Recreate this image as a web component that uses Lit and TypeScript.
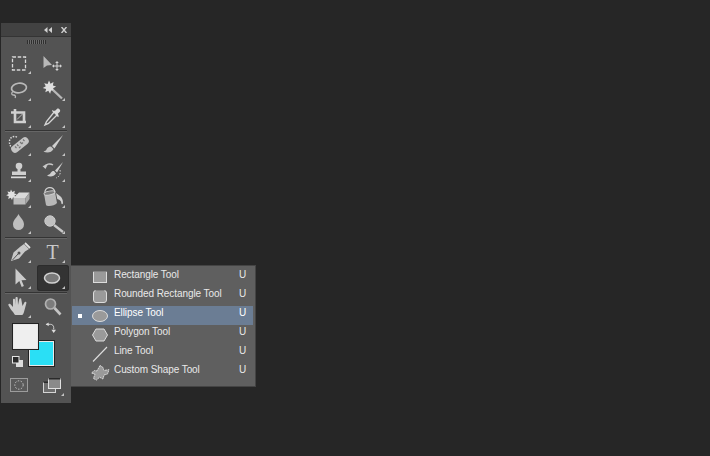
import { LitElement, html, css, svg } from "lit";
import { customElement } from "lit/decorators.js";

const icons: Record<string, any> = {
  marquee: svg`<rect x="10.500" y="7" width="13" height="13" fill="none" stroke="#d8d8d8" stroke-width="1.300" stroke-dasharray="3.500 1.700"/>`,
  move: svg`<path d="M7.500 6L16 15l-5 .5-3.500 2.500z" fill="#b8b8b8"/><path d="M21 12v8M17 16h8" stroke="#d4d4d4" stroke-width="1"/><path d="M21 11l-1.800 2h3.600zM21 21l-1.800-2h3.600zM16 16l2-1.800v3.600zM26 16l-2-1.800v3.600z" fill="#d4d4d4"/>`,
  lasso: svg`<ellipse cx="17" cy="11" rx="7.500" ry="4.800" fill="none" stroke="#b9b9b9" stroke-width="1.700" transform="rotate(-8 17 11)"/><path d="M11 14.500c-2 1.500-1.500 3.500.5 3.500s2.500 1.500 1.500 3" fill="none" stroke="#b9b9b9" stroke-width="1.300"/>`,
  wand: svg`<path transform="translate(-2 .5)" d="M15 3l1.500 3.200 3-1.700-.6 3.500 3.200 1-3 1.800 1.500 3-3.500-.8-1 3.200-1.800-3-3 1.600.8-3.400-3.300-1 3-1.700-1.600-3 3.400.8z" fill="#dedede"/><path d="M17 13l9 8.500" stroke="#b8b8b8" stroke-width="2.400"/>`,
  crop: svg`<path d="M9 8.500h13v10M13 5v13h11" fill="none" stroke="#d0d0d0" stroke-width="2.600"/><path d="M15 15.500l6-6" stroke="#bbb" stroke-width="1"/>`,
  dropper: svg`<g transform="translate(-2.500 -1.500)"><path d="M21 9l3 3-9 9-3.500 1.500L13 19z" fill="none" stroke="#d4d4d4" stroke-width="1.400"/><path d="M18.500 8.500l6 6 1-1-1.700-1.700 2.600-2.600c1.200-1.500-1.500-4-3-2.800l-2.600 2.600-1.600-1.600z" fill="#d8d8d8"/></g>`,
  heal: svg`<path d="M15 5c-4-1.500-7 .5-7.500 4s1.500 6 3 7.500" fill="none" stroke="#dcdcdc" stroke-width="1.400" stroke-dasharray="1.500 1.300"/><path d="M13 17L23 9" stroke="#c4c4c4" stroke-width="7.500" stroke-linecap="round"/><path d="M15 12.500l1.500 1.500M18 10l1.500 1.500M21 10.500l-1.500 1.500M17 16l1.500-1.500M21 7.500l1.500 1.500M13 14.500l1.500 1.500" stroke="#757575" stroke-width="1.100"/>`,
  brush: svg`<path d="M27 3L16 14l2.500 2.500z" fill="#cfcfcf"/><path d="M15 14.500c-3 0-4 2-4.500 3s-1.500 1.500-3 2c3 1.500 8 1.500 10-2.500z" fill="#c4c4c4"/>`,
  stamp: svg`<circle cx="17" cy="8" r="3.300" fill="#cfcfcf"/><path d="M15.500 10h3v3.500h5.500V17H10v-3.500h5.500z" fill="#cfcfcf"/><rect x="9" y="18.500" width="15" height="1.700" fill="#dadada"/>`,
  history: svg`<path d="M8 9c2-3 6-4 9-2" fill="none" stroke="#c8c8c8" stroke-width="1.400"/><path d="M6.500 8l5-1-2 4z" fill="#c8c8c8"/><path d="M27 4L19 12.500l2 2z" fill="#cfcfcf"/><path d="M18 13c-3 0-3 2-4 3l-3 1.500c2.500 1.500 7 1.500 9-2z" fill="#cfcfcf"/><path d="M24 12c1 4-1 7-4 8" fill="none" stroke="#cfcfcf" stroke-dasharray="1.500 1.500"/>`,
  eraser: svg`<path transform="translate(0 2)" d="M9 3.500l1.300 2.500 2.500-1.300-.5 2.800 2.700.8-2.500 1.300 1.200 2.500-2.800-.6-.9 2.600-1.300-2.400-2.500 1.200.6-2.700-2.600-.9 2.400-1.300-1.200-2.500 2.700.6z" fill="#e0e0e0"/><path d="M17 8.500h10.500l-4 5.500H11.500z" fill="#dadada"/><path d="M11.500 14h12v6.500h-12z" fill="#bcbcbc"/><path d="M23.500 14l4-5.500v6.500l-4 5.500z" fill="#a6a6a6"/>`,
  bucket: svg`<path d="M8 10L19 8l2 11c-2 3-10 4-11 2z" fill="#b8b8b8"/><ellipse cx="13.500" cy="9" rx="5.600" ry="1.900" fill="#7c7c7c" stroke="#cfcfcf" transform="rotate(-10 13.500 9)"/><path d="M9 9c-1-6 8-8 10-1" fill="none" stroke="#cfcfcf" stroke-width="1.300"/><path d="M20 9l4 3c2 1.500 3 4 3 7 0 1.500-1.700 1.500-1.700 0 0-2-1-3-4-4z" fill="#cfcfcf"/>`,
  blur: svg`<path d="M16.500 4c2 4 5.500 6 5.500 10.500a5.500 5.500 0 0 1-11 0C11 10 14.500 8 16.500 4z" fill="#bebebe"/>`,
  smudge: svg`<circle cx="14" cy="11" r="5.200" fill="#c0c0c0" stroke="#cdcdcd"/><path d="M18 15l9 7" stroke="#c8c8c8" stroke-width="2.400"/>`,
  pen: svg`<path d="M22 5l5 5-4 2.500-6 7-8 2.500 2.500-8.500 7-6z" fill="#c8c8c8"/><path d="M23 4l5 5" stroke="#dfdfdf" stroke-width="1.800"/><path d="M10.500 21l5.500-6" stroke="#555" stroke-width="1"/><circle cx="17" cy="14" r="1.500" fill="#555"/>`,
  arrow: svg`<path d="M13.500 3.500v16l3.800-3.400 2.400 6 2.200-1-2.400-5.800 5-.4z" fill="#cbcbcb"/>`,
  ellipse: svg`<ellipse cx="16" cy="13" rx="7.500" ry="5" fill="#7a7a7a" stroke="#d4d4d4" stroke-width="1.500"/>`,
  hand: svg`<path d="M11 19c-2-2-3-4-4.500-6.500-.8-1.300 1-2.300 2-1.200l2.500 2.700V6.800c0-1.300 2-1.300 2 0V12l.5-7c0-1.300 2.200-1.300 2.200 0l.3 7 1.300-6c.3-1.300 2.200-1 2 .4L20.500 13l2-3.800c.6-1.100 2.300-.4 1.900.9L22 19c-.5 1.500-1 3-2 3h-6.500c-1 0-1.500-2-2.500-3z" transform="translate(0 -1)" fill="#cccccc"/>`,
  zoom: svg`<circle cx="14.500" cy="10" r="5" fill="#7c7c7c" stroke="#b0b0b0" stroke-width="1.700"/><path d="M18.500 14l6 6.500" stroke="#c4c4c4" stroke-width="2.600"/>`,
};

const tools: string[][] = [
  ["marquee", "move"],
  ["lasso", "wand"],
  ["crop", "dropper"],
  ["heal", "brush"],
  ["stamp", "history"],
  ["eraser", "bucket"],
  ["blur", "smudge"],
  ["pen", "type"],
  ["arrow", "ellipse"],
  ["hand", "zoom"],
];

const menuIcons = [
  svg`<rect x="3.500" y="2.500" width="13" height="11" fill="#9a9a9a" stroke="#dcdcdc"/><path d="M3 2.500h14" stroke="#3c3c3c" stroke-width="1" opacity=".55"/>`,
  svg`<rect x="3.500" y="2.500" width="13" height="12" rx="2.500" fill="#9a9a9a" stroke="#dcdcdc"/><path d="M5.500 2.500h9" stroke="#3c3c3c" stroke-width="1" opacity=".55"/>`,
  svg`<ellipse cx="10" cy="9" rx="7.500" ry="5.500" fill="#9a9a9a" stroke="#dcdcdc"/>`,
  svg`<path d="M6 3h8l3.500 6L14 15H6L2.500 9z" fill="#9a9a9a" stroke="#dcdcdc"/>`,
  svg`<path d="M3 16.500L17 2" stroke="#dedede" stroke-width="1.100" fill="none"/>`,
  svg`<path d="M10 1.500l3 2c.8 1.500 0 2.500 1 3l5-.8-1.500 4.300-3.500 1-1 4-3.500-1.800-3 2.800-3-1.500 1.500-4.500L1.500 9 4.500 6.500l2.500.5z" fill="#9a9a9a" stroke="#d8d8d8" stroke-dasharray="2 .6"/>`,
];

const items = [
  "Rectangle Tool",
  "Rounded Rectangle Tool",
  "Ellipse Tool",
  "Polygon Tool",
  "Line Tool",
  "Custom Shape Tool",
];

@customElement("app-root")
export class AppRoot extends LitElement {
  static styles = css`
    :host {
      display: block;
      width: 710px;
      height: 456px;
      background: #262626;
      padding: 23px 0 0 1px;
      box-sizing: border-box;
      overflow: hidden;
      font-family: "Liberation Sans", Arial, sans-serif;
    }
    .panel {
      position: relative;
      width: 70px;
      height: 380px;
      background: #535353;
      box-sizing: border-box;
      border-radius: 2px 2px 0 0;
      display: flex;
      flex-direction: column;
      align-items: stretch;
    }
    .head {
      height: 14px;
      flex: none;
      background: #424242;
      border-bottom: 1px solid #343434;
      box-sizing: border-box;
      display: flex;
      justify-content: flex-end;
      align-items: center;
      gap: 9px;
      padding-right: 4px;
    }
    .head svg { display: block; }
    .grip {
      height: 13px;
      flex: none;
      display: flex;
      justify-content: center;
      padding-top: 3px;
      box-sizing: border-box;
    }
    .grip span {
      width: 19px;
      height: 4px;
      background: repeating-linear-gradient(90deg, #2f2f2f 0 1px, #6a6a6a 1px 2px);
    }
    .tools {
      display: flex;
      flex-direction: column;
      padding-left: 1px;
    }
    .row { display: flex; height: 26px; flex: none; }
    .tool {
      position: relative;
      width: 34px;
      height: 26px;
      box-sizing: border-box;
    }
    .tool svg { display: block; }
    .tool.on {
      background: #333333;
      border-radius: 3px;
      width: 32px;
      margin-left: 1px;
      box-shadow: inset 0 0 0 1px #2c2c2c;
    }
    .tool.on svg { margin-left: -1px; }
    .tool::after {
      content: "";
      position: absolute;
      right: 5px;
      bottom: 2px;
      border-left: 3px solid transparent;
      border-bottom: 3px solid #c4c4c4;
    }
    .tool.on::after { right: 4px; }
    .tool.plain::after { display: none; }
    .t {
      display: block;
      width: 33px;
      text-align: center;
      font-family: "Liberation Serif", serif;
      font-size: 20px;
      line-height: 26px;
      color: #c8c8c8;
    }
    .sep {
      height: 1px;
      flex: none;
      background: #343434;
      margin: 0 4px;
      box-shadow: 0 1px 0 #666;
    }
    .gap1 { height: 1px; flex: none; }
    .swatches {
      position: relative;
      height: 52px;
      flex: none;
    }
    .fg, .bg {
      position: absolute;
      box-sizing: border-box;
      border: 1px solid #e8e8e8;
      outline: 1px solid #222;
    }
    .fg {
      left: 12px;
      top: 4px;
      width: 25px;
      height: 25px;
      background: #efefef;
      z-index: 1;
    }
    .bg {
      left: 28px;
      top: 21px;
      width: 25px;
      height: 25px;
      background: #2adff5;
    }
    .mini { position: absolute; left: 11px; top: 36px; }
    .swap { position: absolute; left: 44px; top: 2px; }
    .bottom {
      display: flex;
      height: 28px;
      flex: none;
      padding-left: 9px;
      padding-top: 6px;
      box-sizing: border-box;
      gap: 15px;
    }
    .bottom svg { display: block; }
    .fly {
      position: absolute;
      left: 70px;
      top: 242px;
      width: 185px;
      height: 122px;
      background: #5f5f5f;
      border: 1px solid #444;
      border-left: none;
      box-sizing: border-box;
      padding-top: 2px;
      padding-left: 1px;
      color: #e9e9e9;
      font-size: 10px;
      letter-spacing: -0.08px;
    }
    .item {
      display: flex;
      align-items: center;
      height: 19px;
      width: 181px;
    }
    .item.sel { background: #6b7d94; color: #fff; }
    .dot { width: 7px; flex: none; margin-left: 6px; margin-right: 5px; }
    .dot i {
      display: block;
      width: 4px;
      height: 4px;
      background: #fff;
      visibility: hidden;
    }
    .sel .dot i { visibility: visible; }
    .item svg { flex: none; display: block; width: 20px; height: 18px; margin-right: 4px; }
    .label { flex: 1; white-space: nowrap; padding-bottom: 6px; }
    .key { width: 14px; flex: none; padding-bottom: 6px; }
  `;

  private tool(name: string) {
    const on = name === "ellipse";
    const plain = name === "move" || name === "zoom";
    const body =
      name === "type"
        ? html`<span class="t">T</span>`
        : html`<svg width="34" height="26" viewBox="0 0 34 26">${icons[name]}</svg>`;
    return html`<div class="tool ${on ? "on" : ""} ${plain ? "plain" : ""}">${body}</div>`;
  }

  private rows(from: number, to: number) {
    return tools.slice(from, to).map(
      (r) => html`<div class="row">${r.map((n) => this.tool(n))}</div>`
    );
  }

  render() {
    return html`
      <div class="panel">
        <div class="head">
          <svg width="8" height="6" viewBox="0 0 8 6"><path d="M3.500 0v6L0 3zM8 0v6L4.500 3z" fill="#d0d0d0"/></svg>
          <svg width="6" height="6" viewBox="0 0 6 6"><path d="M.5 0l5 6M5.500 0l-5 6" stroke="#d0d0d0" stroke-width="1.400"/></svg>
        </div>
        <div class="grip"><span></span></div>
        <div class="tools">
          ${this.rows(0, 1)}<div class="gap1"></div>
          ${this.rows(1, 2)}<div class="gap1"></div>
          ${this.rows(2, 3)}
        </div>
        <div class="sep"></div>
        <div class="gap1"></div>
        <div class="tools">${this.rows(3, 7)}</div>
        <div class="gap1"></div>
        <div class="sep"></div>
        <div class="gap1"></div>
        <div class="tools">${this.rows(7, 9)}</div>
        <div class="gap1"></div>
        <div class="sep"></div>
        <div class="gap1"></div>
        <div class="tools">${this.rows(9, 10)}</div>
        <div class="swatches">
          <div class="fg"></div>
          <div class="bg"></div>
          <svg class="swap" width="11" height="12" viewBox="0 0 12 13">
            <path d="M1 2.500h5c2 0 3.500 1.500 3.500 3.500v2" fill="none" stroke="#dcdcdc"/>
            <path d="M1 2.500L4 .5v4zM9.500 12l-2.500-3.500h5z" fill="#dcdcdc"/>
          </svg>
          <svg class="mini" width="11" height="11" viewBox="0 0 11 11">
            <rect x="4" y="4" width="7" height="7" fill="#dcdcdc"/>
            <rect x=".5" y=".5" width="6.500" height="6.500" fill="#2a2a2a" stroke="#e4e4e4"/>
          </svg>
        </div>
        <div class="bottom">
          <svg width="18" height="14" viewBox="0 0 18 14">
            <rect x=".5" y=".5" width="17" height="13" fill="#5a5a5a" stroke="#9c9c9c"/>
            <circle cx="9" cy="7" r="4.200" fill="none" stroke="#c8c8c8" stroke-dasharray="1.500 1.500"/>
          </svg>
          <svg width="22" height="18" viewBox="0 0 22 18">
            <rect x=".5" y="4.500" width="12" height="10" fill="#6d6d6d" stroke="#d4d4d4"/>
            <rect x=".5" y="3.500" width="12" height="1.500" fill="#2a2a2a"/>
            <rect x="5.500" y=".5" width="12" height="10" fill="#8a8a8a" stroke="#e0e0e0"/>
            <rect x="5.500" y="0" width="12" height="1.500" fill="#2a2a2a"/>
            <path d="M18 18h3v-3z" fill="#c4c4c4"/>
          </svg>
        </div>
        <div class="fly">
          ${items.map(
            (t, i) => html`<div class="item ${i === 2 ? "sel" : ""}">
              <div class="dot"><i></i></div>
              <svg viewBox="0 0 20 18">${menuIcons[i]}</svg>
              <div class="label">${t}</div>
              <div class="key">U</div>
            </div>`
          )}
        </div>
      </div>
    `;
  }
}
